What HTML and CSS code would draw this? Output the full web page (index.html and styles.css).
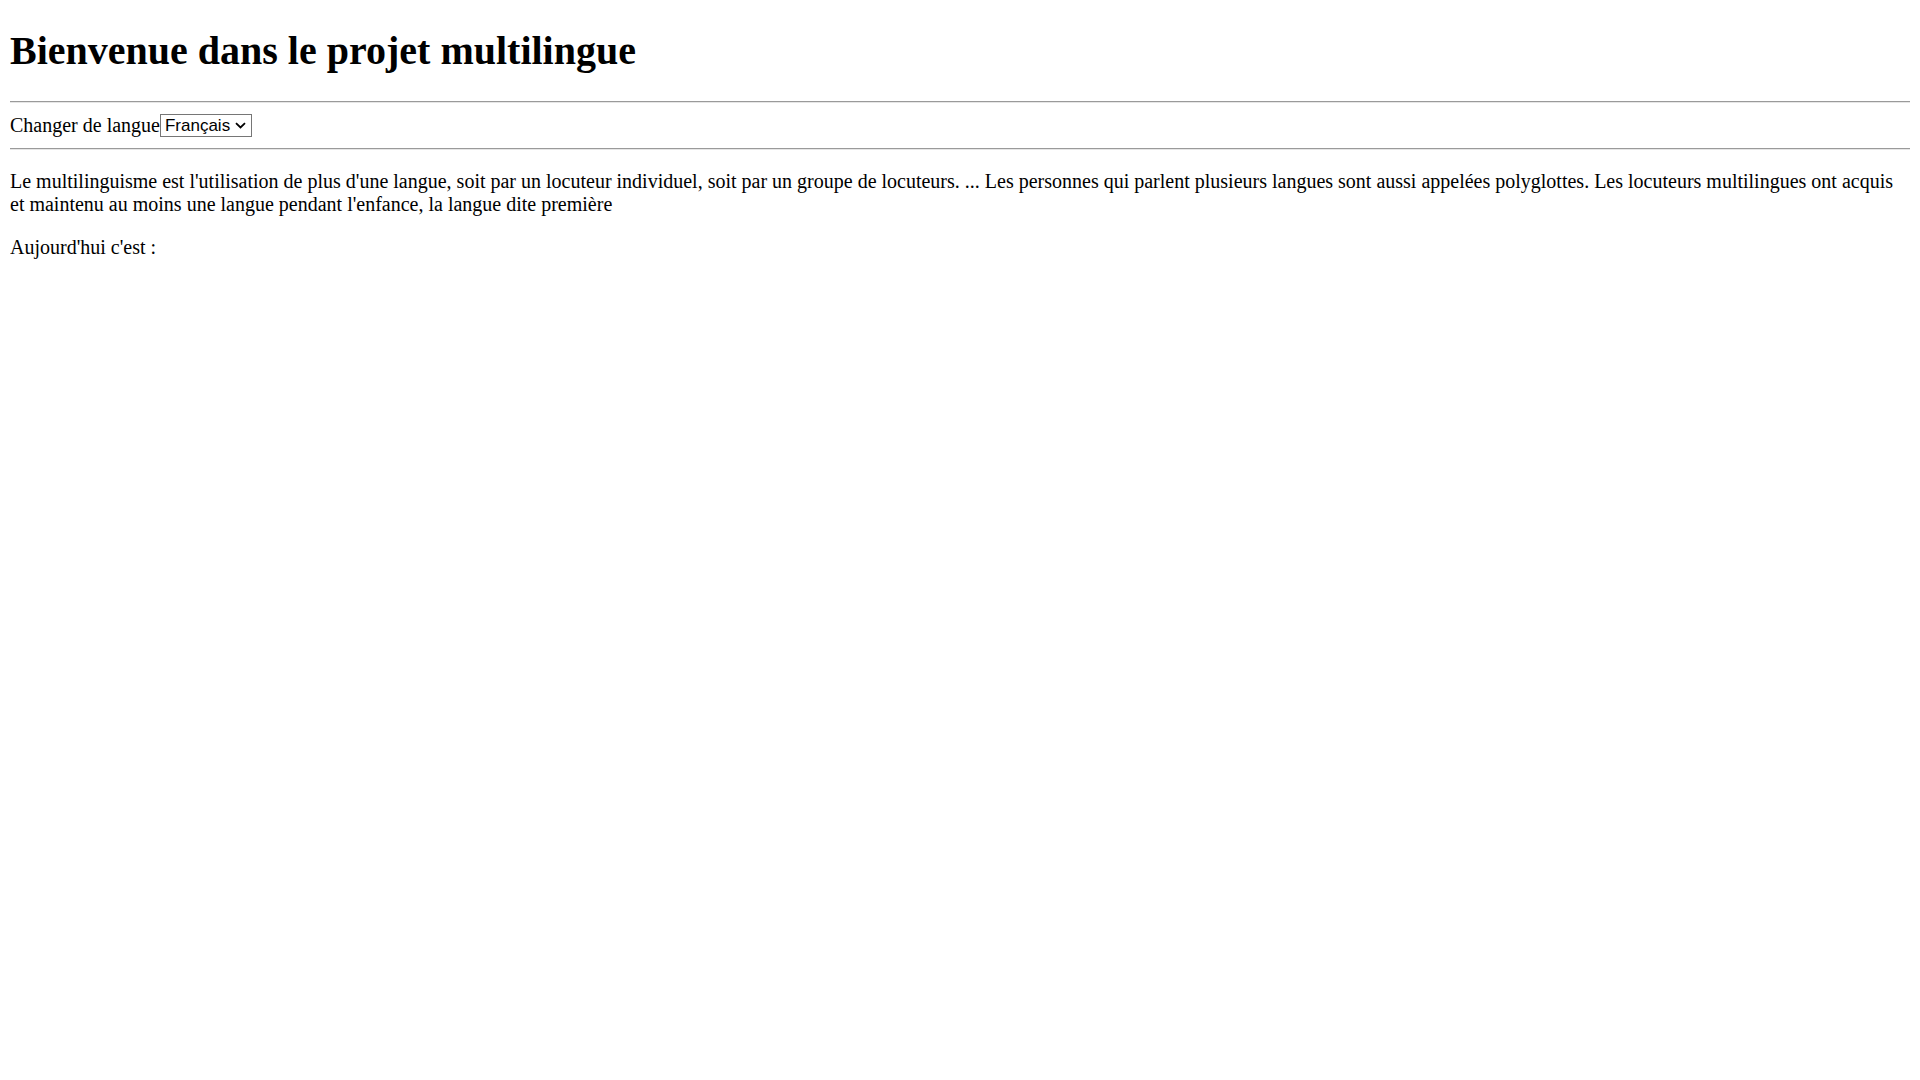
FILE: index.html
```html
<!DOCTYPE html>
<html lang="fr">
<head>
<meta charset="utf-8">
<title>Projet multilingue</title>
<link rel="stylesheet" href="styles.css">
</head>
<body class="page">
<h1 class="title">Bienvenue dans le projet multilingue</h1>
<hr class="rule">
<div class="lang-row"><label class="lang-label" for="lang">Changer de langue</label><span class="select-wrap"><select id="lang" class="lang-select"><option>Français</option><option>English</option></select><svg class="chevron" width="11" height="7" viewBox="0 0 11 7"><path d="M1 1.2 L5.5 5.5 L10 1.2" fill="none" stroke="#000" stroke-width="1.8"/></svg></span></div>
<hr class="rule">
<p class="text">Le multilinguisme est l'utilisation de plus d'une langue, soit par un locuteur individuel, soit par un groupe de locuteurs. ... Les personnes qui parlent plusieurs langues sont aussi appelées polyglottes. Les locuteurs multilingues ont acquis et maintenu au moins une langue pendant l'enfance, la langue dite première</p>
<p class="text">Aujourd'hui c'est :</p>
</body>
</html>
```
FILE: styles.css
```css
html, body {
  background: #fff;
}
.page {
  margin: 10px;
  font-family: "Liberation Serif", "Times New Roman", serif;
  font-size: 20px;
  color: #000;
}
.title {
  font-size: 40px;
  font-weight: bold;
  margin: 17px 0 26.8px;
}
.rule {
  margin: 10px 0;
  border: none;
  border-top: 1px solid #9a9a9a;
  border-bottom: 1px solid #e6e6e6;
  height: 0;
}
.lang-row {
  line-height: 23px;
  height: 25px;
  display: flex;
  align-items: center;
}
.select-wrap {
  position: relative;
  display: inline-flex;
}
.lang-select {
  -webkit-appearance: none;
  appearance: none;
  box-sizing: border-box;
  font-family: "Liberation Sans", Arial, sans-serif;
  font-size: 17px;
  width: 92px;
  height: 23px;
  border: 1px solid #767676;
  border-radius: 0;
  padding: 1px 0 0 4px;
  background: #fff;
  color: #000;
}
.chevron {
  position: absolute;
  right: 6px;
  top: 8px;
  pointer-events: none;
}
.text {
  margin: 20px 0;
  line-height: 23px;
}
```
